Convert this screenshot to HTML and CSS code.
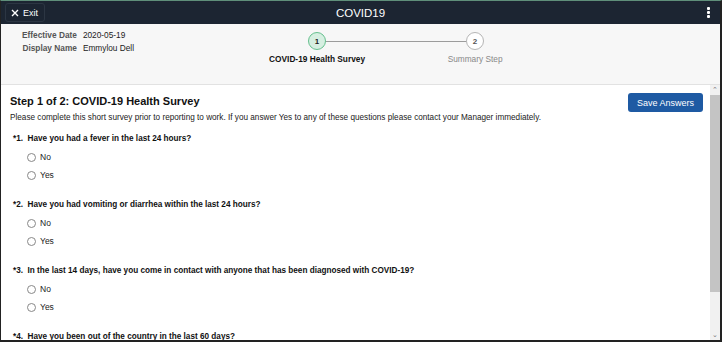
FILE: index.html
```html
<!DOCTYPE html>
<html lang="en">
<head>
  <meta charset="UTF-8">
  <title>COVID19</title>
  <link rel="stylesheet" href="styles.css">
</head>
<body>
  <div class="frame">
    <div class="topbar">
      <button class="exitBtn">
        <svg width="8" height="8" viewBox="0 0 8 8"><path d="M1 1L7 7M7 1L1 7" stroke="#fff" stroke-width="1.4"/></svg>
        Exit
      </button>
      <div class="title">COVID19</div>
      <div class="kebab"><span></span><span></span><span></span></div>
    </div>

    <div class="infoBar">
      <table class="info">
        <tr><td class="lbl">Effective Date</td><td>2020-05-19</td></tr>
        <tr><td class="lbl">Display Name</td><td>Emmylou Dell</td></tr>
      </table>

      <div class="steps">
        <div class="step current">
          <div class="dot">1</div>
          <div class="stepName">COVID-19 Health Survey</div>
        </div>
        <div class="step">
          <div class="dot">2</div>
          <div class="stepName">Summary Step</div>
        </div>
      </div>
    </div>

    <div class="body">
      <div class="main">
        <div class="headRow">
          <h1>Step 1 of 2: COVID-19 Health Survey</h1>
          <button class="saveBtn">Save Answers</button>
        </div>
        <p class="intro">Please complete this short survey prior to reporting to work. If you answer Yes to any of these questions please contact your Manager immediately.</p>

        <div class="question">
          <div class="qText">*1.&nbsp; Have you had a fever in the last 24 hours?</div>
          <label class="opt"><span class="radio"></span>No</label>
          <label class="opt"><span class="radio"></span>Yes</label>
        </div>
        <div class="question">
          <div class="qText">*2.&nbsp; Have you had vomiting or diarrhea within the last 24 hours?</div>
          <label class="opt"><span class="radio"></span>No</label>
          <label class="opt"><span class="radio"></span>Yes</label>
        </div>
        <div class="question">
          <div class="qText">*3.&nbsp; In the last 14 days, have you come in contact with anyone that has been diagnosed with COVID-19?</div>
          <label class="opt"><span class="radio"></span>No</label>
          <label class="opt"><span class="radio"></span>Yes</label>
        </div>
        <div class="question">
          <div class="qText">*4.&nbsp; Have you been out of the country in the last 60 days?</div>
        </div>
      </div>

      <div class="scrollbar">
        <div class="arrow">&#8963;</div>
        <div class="track"><div class="thumb"></div></div>
        <div class="arrow">&#8964;</div>
      </div>
    </div>
  </div>
</body>
</html>
```

FILE: styles.css
```css
body {
  margin: 0;
  font-family: "Liberation Sans", Arial, sans-serif;
  background-color: #fff;
}

.frame {
  width: 722px;
  height: 342px;
  box-sizing: border-box;
  border-top: 1px solid #5f8f7a;
  border-left: 1px solid #222;
  border-right: 2px solid #222;
  border-bottom: 2px solid #222;
  display: flex;
  flex-direction: column;
  overflow: hidden;
}

.topbar {
  height: 23px;
  background-color: #1c2532;
  display: flex;
  align-items: center;
  position: relative;
  flex-shrink: 0;
}

.exitBtn {
  margin-left: 4px;
  height: 19px;
  padding: 0 6px 0 5px;
  background-color: #1c2532;
  border: 1px solid #2c3643;
  border-radius: 3px;
  color: #fff;
  font-family: inherit;
  font-size: 9px;
  display: flex;
  align-items: center;
  gap: 4px;
}

.title {
  position: absolute;
  left: 0;
  right: 0;
  text-align: center;
  color: #fff;
  font-size: 11.5px;
  pointer-events: none;
}

.kebab {
  margin-left: auto;
  margin-right: 10px;
  display: flex;
  flex-direction: column;
  gap: 1px;
}

.kebab span {
  width: 3px;
  height: 3px;
  background-color: #fff;
  border-radius: 1px;
}

.infoBar {
  height: 60px;
  background-color: #f7f7f7;
  border-bottom: 1px solid #e2e2e2;
  display: flex;
  flex-shrink: 0;
}

.info {
  margin: 5px 0 0 17px;
  border-collapse: collapse;
  font-size: 8.3px;
  color: #222;
  align-self: flex-start;
}

.info td {
  padding: 1px 2px 2px 4px;
}

.info .lbl {
  color: #555;
  font-weight: bold;
  text-align: right;
}

.steps {
  display: flex;
  margin-left: 102px;
  margin-top: 8px;
  position: relative;
}

.steps::before {
  content: "";
  position: absolute;
  top: 9px;
  left: 80px;
  width: 158px;
  height: 1px;
  background-color: #9c9c9c;
}

.step {
  width: 158px;
  display: flex;
  flex-direction: column;
  align-items: center;
  position: relative;
}

.dot {
  width: 16px;
  height: 16px;
  border: 1px solid #b5b5b5;
  border-radius: 50%;
  background-color: #fff;
  font-size: 8px;
  font-weight: bold;
  color: #555;
  display: flex;
  align-items: center;
  justify-content: center;
}

.current .dot {
  background-color: #d6efe1;
  border-color: #66c08e;
  color: #222;
}

.stepName {
  margin-top: 4px;
  font-size: 8.3px;
  color: #888;
}

.current .stepName {
  color: #111;
  font-weight: bold;
}

.body {
  flex: 1;
  display: flex;
  min-height: 0;
}

.main {
  flex: 1;
  padding: 8px 9px 0 9px;
  overflow: hidden;
}

.headRow {
  display: flex;
  justify-content: space-between;
  align-items: flex-start;
}

h1 {
  margin: 2px 0 2px 0;
  font-size: 11px;
  color: #111;
}

.saveBtn {
  margin-right: -2px;
  width: 75px;
  height: 19px;
  background-color: #1e5aa3;
  color: #fff;
  border: none;
  border-radius: 3px;
  font-family: inherit;
  font-size: 9px;
}

.intro {
  margin: 1px 0 12px 0;
  font-size: 8.2px;
  color: #222;
}

.question {
  margin-left: 3px;
  margin-bottom: 16px;
}

.qText {
  font-size: 8.2px;
  font-weight: bold;
  color: #111;
  margin-bottom: 5px;
}

.opt {
  display: flex;
  align-items: center;
  gap: 4px;
  margin-left: 14px;
  height: 18px;
  font-size: 8.5px;
  color: #222;
}

.radio {
  width: 7px;
  height: 7px;
  border: 1px solid #888;
  border-radius: 50%;
  background-color: #fff;
}

.scrollbar {
  width: 10px;
  background-color: #f1f1f1;
  display: flex;
  flex-direction: column;
}

.arrow {
  height: 10px;
  font-size: 7px;
  color: #777;
  text-align: center;
  line-height: 10px;
}

.track {
  flex: 1;
}

.thumb {
  height: 197px;
  background-color: #c4c4c4;
}
```
